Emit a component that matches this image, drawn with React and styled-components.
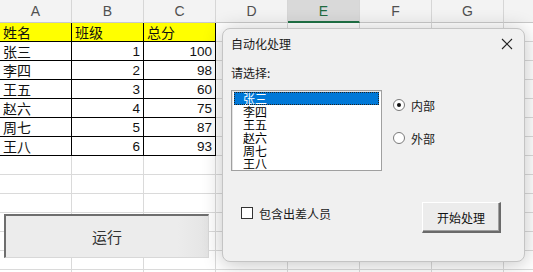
import React from 'react';
import styled, { createGlobalStyle } from 'styled-components';

const GlobalStyle = createGlobalStyle`
  html, body {
    margin: 0;
    padding: 0;
    background: #ffffff;
    overflow: hidden;
  }
`;

const CJK = `"Noto Sans CJK SC", "Noto Sans", sans-serif`;

// last column is only partly on screen, its letter falls outside the view
const columns = ['A', 'B', 'C', 'D', 'E', 'F', 'G', ''];
const selectedColumn = 'E';

const records = [
  ['张三', 1, 100],
  ['李四', 2, 98],
  ['王五', 3, 60],
  ['赵六', 4, 75],
  ['周七', 5, 87],
  ['王八', 6, 93],
];

const people = records.map((r) => r[0]);
const EMPTY_ROWS = 7;

const Page = styled.div`
  position: relative;
  width: 533px;
  height: 272px;
  overflow: hidden;
`;

const Grid = styled.div`
  display: grid;
  grid-template-columns: repeat(8, 72px);
  grid-template-rows: 23px repeat(14, 19px);
`;

const ColHeader = styled.div`
  box-sizing: border-box;
  display: flex;
  align-items: center;
  justify-content: center;
  background: ${(p) => (p.$active ? '#d9d9d9' : '#f3f3f3')};
  border-right: 1px solid #d6d6d6;
  border-bottom: ${(p) => (p.$active ? '2px solid #1f7145' : '1px solid #c9c9c9')};
  color: ${(p) => (p.$active ? '#1f6a40' : '#505050')};
  font-family: "Liberation Sans", Arial, sans-serif;
  font-size: 14px;
`;

const Cell = styled.div`
  box-sizing: border-box;
  display: flex;
  align-items: center;
  justify-content: ${(p) => (p.$num ? 'flex-end' : 'flex-start')};
  padding: 0 3px;
  background: ${(p) => p.$fill || '#ffffff'};
  border-right: 1px solid ${(p) => (p.$boxed ? '#000000' : '#dadada')};
  border-bottom: 1px solid ${(p) => (p.$boxed ? '#000000' : '#dadada')};
  color: #111;
  font-family: ${(p) => (p.$num ? `"Liberation Sans", Arial, sans-serif` : CJK)};
  font-size: ${(p) => (p.$num ? '13.5px' : '14px')};
  white-space: nowrap;
  overflow: hidden;
`;

const RunButton = styled.button`
  position: absolute;
  left: 4px;
  top: 214px;
  width: 205px;
  height: 44px;
  box-sizing: border-box;
  background: linear-gradient(to right, #ececec 85%, #e4e4e4);
  border-top: 2px solid #6e6e6e;
  border-left: 2px solid #6e6e6e;
  border-right: 1px solid #d8d8d8;
  border-bottom: 1px solid #d8d8d8;
  font-family: ${CJK};
  font-size: 15px;
  color: #333;
  padding: 0;
`;

const Dialog = styled.div`
  position: absolute;
  left: 222px;
  top: 28px;
  width: 303px;
  height: 234px;
  box-sizing: border-box;
  display: flex;
  flex-direction: column;
  background: #f0f0f0;
  border: 1px solid #c4c4c4;
  border-radius: 8px;
  box-shadow: 0 2px 20px rgba(0, 0, 0, 0.24);
  font-family: ${CJK};
  font-size: 12px;
  color: #1a1a1a;
`;

const TitleBar = styled.div`
  height: 29px;
  display: flex;
  align-items: center;
  justify-content: space-between;
  padding: 0 8px 0 8px;
  font-size: 12px;
`;

const CloseIcon = styled.svg`
  width: 12px;
  height: 12px;
  margin-right: 3px;
`;

const Body = styled.div`
  display: flex;
  flex-direction: column;
  padding: 0 9px 0 8px;
`;

const Label = styled.div`
  line-height: 16px;
  margin-top: 7px;
`;

const Middle = styled.div`
  display: flex;
  margin-top: 9px;
`;

const ListBox = styled.div`
  box-sizing: border-box;
  width: 151px;
  height: 81px;
  background: #ffffff;
  border: 1px solid #a0a0a0;
  box-shadow: inset 1px 1px 0 #e3e3e3;
  padding: 1px 2px 0 2px;
  overflow: hidden;
`;

const ListItem = styled.div`
  box-sizing: border-box;
  height: 13px;
  line-height: 13px;
  padding-left: 9px;
  background: ${(p) => (p.$selected ? '#0078d7' : 'transparent')};
  color: ${(p) => (p.$selected ? '#ffffff' : '#000000')};
  outline: ${(p) => (p.$selected ? '1px dotted #222' : 'none')};
  outline-offset: -1px;
  font-size: 12px;
`;

const RadioGroup = styled.div`
  display: flex;
  flex-direction: column;
  gap: 17px;
  padding: 7px 0 0 11px;
`;

const Option = styled.label`
  display: flex;
  align-items: center;
  gap: 6px;
  height: 16px;
`;

const RadioMark = styled.span`
  box-sizing: border-box;
  width: 12px;
  height: 12px;
  border-radius: 50%;
  border: 1px solid #7a7a7a;
  background: #ffffff;
  display: flex;
  align-items: center;
  justify-content: center;

  &::after {
    content: '';
    width: 4px;
    height: 4px;
    border-radius: 50%;
    background: ${(p) => (p.$checked ? '#111' : 'transparent')};
  }
`;

const Bottom = styled.div`
  display: flex;
  justify-content: space-between;
  align-items: flex-start;
  margin-top: 31px;
`;

const CheckOption = styled.label`
  display: flex;
  align-items: center;
  gap: 6px;
  margin: 4px 0 0 10px;
  height: 14px;
`;

const CheckMark = styled.span`
  box-sizing: border-box;
  width: 12px;
  height: 12px;
  border: 1px solid #333;
  background: #ffffff;
`;

const ActionButton = styled.button`
  box-sizing: border-box;
  width: 79px;
  height: 31px;
  margin-right: 14px;
  background: #ececec;
  border-top: 1px solid #ffffff;
  border-left: 1px solid #ffffff;
  border-right: 2px solid #6a6a6a;
  border-bottom: 2px solid #6a6a6a;
  box-shadow: inset -1px -1px 0 #a0a0a0;
  font-family: ${CJK};
  font-size: 12px;
  color: #111;
  padding: 0;
`;

function Sheet() {
  const cells = [];
  columns.forEach((c, i) => {
    cells.push(
      <ColHeader key={'h' + i} $active={c === selectedColumn}>
        {c}
      </ColHeader>
    );
  });
  const header = ['姓名', '班级', '总分'];
  const rows = [header, ...records];
  rows.forEach((row, r) => {
    columns.forEach((c, ci) => {
      const inTable = ci < 3;
      const value = inTable ? row[ci] : '';
      cells.push(
        <Cell
          key={`r${r}-${ci}`}
          $boxed={inTable}
          $fill={r === 0 && inTable ? '#ffff00' : null}
          $num={typeof value === 'number'}
        >
          {value}
        </Cell>
      );
    });
  });
  for (let r = 0; r < EMPTY_ROWS; r++) {
    columns.forEach((c, ci) => cells.push(<Cell key={`e${r}-${ci}`} />));
  }
  return <Grid>{cells}</Grid>;
}

export default function App() {
  return (
    <>
      <GlobalStyle />
      <Page>
        <Sheet />
        <RunButton>运行</RunButton>
        <Dialog>
          <TitleBar>
            <span>自动化处理</span>
            <CloseIcon viewBox="0 0 12 12">
              <path d="M1 1 L11 11 M11 1 L1 11" stroke="#222" strokeWidth="1.1" fill="none" />
            </CloseIcon>
          </TitleBar>
          <Body>
            <Label>请选择:</Label>
            <Middle>
              <ListBox>
                {people.map((name, i) => (
                  <ListItem key={name} $selected={i === 0}>
                    {name}
                  </ListItem>
                ))}
              </ListBox>
              <RadioGroup>
                <Option>
                  <RadioMark $checked />
                  内部
                </Option>
                <Option>
                  <RadioMark />
                  外部
                </Option>
              </RadioGroup>
            </Middle>
            <Bottom>
              <CheckOption>
                <CheckMark />
                包含出差人员
              </CheckOption>
              <ActionButton>开始处理</ActionButton>
            </Bottom>
          </Body>
        </Dialog>
      </Page>
    </>
  );
}
